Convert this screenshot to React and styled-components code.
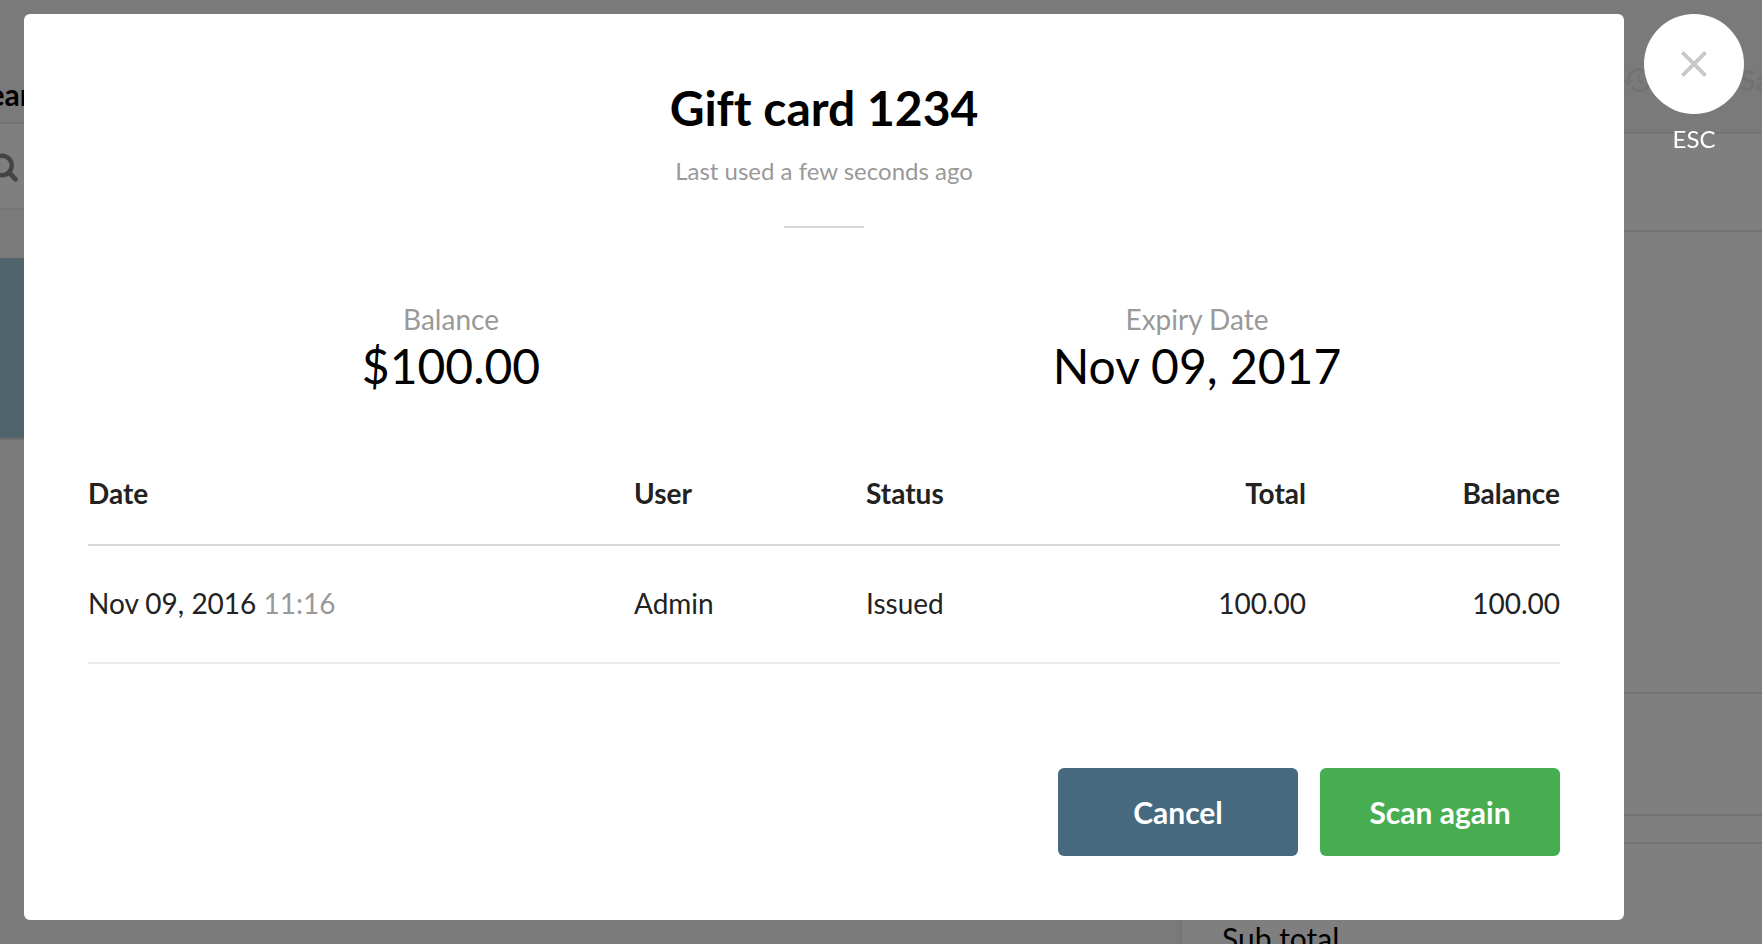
import React from "react";
import styled, { createGlobalStyle } from "styled-components";
import { MdHistory } from "react-icons/md";

const GlobalStyle = createGlobalStyle`
  * { box-sizing: border-box; }
  body {
    margin: 0;
    font-family: Lato, "Liberation Sans", sans-serif;
    font-variant-ligatures: none;
    color: #222;
    overflow: hidden;
  }
`;

const Register = styled.div`
  display: flex;
  height: 100vh;
  margin-left: -80px;
  overflow: hidden;
  background: #f5f5f5;
`;

const Catalog = styled.section`
  flex: 1;
`;

const CatalogTitle = styled.h2`
  margin: 0;
  height: 124px;
  padding: 76px 52px 0;
  font-size: 30px;
  line-height: 36px;
  color: #000;
  border-bottom: 2px solid #e8e8e8;
`;

const SearchRow = styled.div`
  display: flex;
  align-items: center;
  height: 86px;
  padding: 4px 68px 0;
  color: #888;
  background: #fff;
  border-bottom: 2px solid #e8e8e8;
`;

const Tile = styled.div`
  height: 182px;
  margin: 48px 60px 0;
  background: #9fc8d6;
  border-bottom: 2px solid #e0dfe0;
`;

const Sale = styled.section`
  width: 582px;
`;

const SaleActions = styled.div`
  display: flex;
  align-items: flex-start;
  justify-content: flex-end;
  gap: 96px;
  height: 134px;
  padding: 62px 0 0;
  font-size: 28px;
  line-height: 36px;
  color: #e4e4e4;
  border-bottom: 2px solid #e8e8e8;
`;

const SaleAction = styled.span`
  display: flex;
  align-items: center;
  width: 22px;
  height: 36px;
  font-weight: 700;
  white-space: nowrap;

  svg {
    flex-shrink: 0;
  }
`;

const SaleBody = styled.div`
  min-height: 100vh;
  background: #fff;
  border-left: 2px solid #e8e8e8;
`;

const SaleRow = styled.div`
  height: ${(p) => p.$height}px;
  border-bottom: 2px solid #e8e8e8;
`;

const SubTotal = styled.div`
  padding: 76px 40px 0;
  font-size: 30px;
  line-height: 36px;
  color: #000;
`;

const Overlay = styled.div`
  position: fixed;
  inset: 0;
  display: flex;
  align-items: flex-start;
  gap: 20px;
  padding: 14px 18px 24px 24px;
  background: rgba(0, 0, 0, 0.5);
`;

const Dialog = styled.div`
  flex: 1;
  padding: 64px;
  background: #fff;
  border-radius: 6px;
`;

const Heading = styled.header`
  display: flex;
  flex-direction: column;
  align-items: center;
`;

const Title = styled.h1`
  margin: 0;
  font-size: 48px;
  line-height: 60px;
  color: #000;
`;

const LastUsed = styled.p`
  margin: 16px 0 0;
  font-size: 24px;
  line-height: 34px;
  color: #999;
`;

const Divider = styled.hr`
  width: 80px;
  height: 2px;
  margin: 38px 0 0;
  border: 0;
  background: #d8d8d8;
`;

const Summary = styled.dl`
  display: grid;
  grid-template-columns: 1fr 1fr;
  gap: 20px;
  margin: 72px 0 0;
  text-align: center;
`;

const Label = styled.dt`
  font-size: 28px;
  line-height: 38px;
  color: #999;
`;

const Value = styled.dd`
  margin: 0;
  font-size: 48px;
  line-height: 56px;
  color: #000;
`;

const History = styled.table`
  width: 100%;
  margin-top: 52px;
  border-collapse: separate;
  border-spacing: 0;
  table-layout: fixed;
  font-size: 28px;
  line-height: 34px;
`;

const Col = styled.col`
  width: ${(p) => p.$width};
`;

const HeadCell = styled.th`
  padding: 30px 0 34px;
  text-align: ${(p) => p.$align || "left"};
  border-bottom: 2px solid #d8d8d8;
`;

const Cell = styled.td`
  padding: 40px 0 42px;
  text-align: ${(p) => p.$align || "left"};
  border-bottom: 2px solid #ebebeb;
`;

const Time = styled.span`
  color: #999;
`;

const Actions = styled.div`
  display: flex;
  justify-content: flex-end;
  gap: 22px;
  margin-top: 104px;
`;

const Button = styled.button`
  width: 240px;
  height: 88px;
  border: 0;
  border-radius: 6px;
  font: 700 30px Lato, "Liberation Sans", sans-serif;
  color: #fff;
  background: ${(p) => (p.$primary ? "#47ad51" : "#46697f")};
`;

const CloseColumn = styled.div`
  display: flex;
  flex-direction: column;
  align-items: center;
  gap: 8px;
  font-size: 24px;
  line-height: 34px;
  color: #fff;
`;

const CloseButton = styled.button`
  display: grid;
  place-items: center;
  width: 100px;
  height: 100px;
  padding: 0;
  border: 0;
  border-radius: 50%;
  color: #c8c8c8;
  background: #fff;
`;

export default function App() {
  return (
    <>
      <GlobalStyle />
      <Register aria-hidden="true">
        <Catalog>
          <CatalogTitle>Search</CatalogTitle>
          <SearchRow>
            <svg width="32" height="32" viewBox="0 0 32 32" fill="none" stroke="currentColor" strokeLinecap="round">
              <circle cx="14" cy="13.5" r="9.8" strokeWidth="4.4" />
              <path d="M21 20.5l6.6 6.8" strokeWidth="4.8" />
            </svg>
          </SearchRow>
          <Tile />
        </Catalog>
        <Sale>
          <SaleActions>
            <SaleAction>
              <MdHistory size={32} />
            </SaleAction>
            <SaleAction>Save</SaleAction>
          </SaleActions>
          <SaleBody>
            <SaleRow $height={98} />
            <SaleRow $height={462} />
            <SaleRow $height={122} />
            <SaleRow $height={28} />
            <SubTotal>Sub total</SubTotal>
          </SaleBody>
        </Sale>
      </Register>
      <Overlay>
        <Dialog role="dialog" aria-modal="true" aria-labelledby="dialog-title">
          <Heading>
            <Title id="dialog-title">Gift card 1234</Title>
            <LastUsed>Last used a few seconds ago</LastUsed>
            <Divider />
          </Heading>
          <Summary>
            <div>
              <Label>Balance</Label>
              <Value>$100.00</Value>
            </div>
            <div>
              <Label>Expiry Date</Label>
              <Value>Nov 09, 2017</Value>
            </div>
          </Summary>
          <History>
            <colgroup>
              <Col $width="546px" />
              <Col $width="232px" />
              <Col $width="auto" />
              <Col $width="220px" />
              <Col $width="254px" />
            </colgroup>
            <thead>
              <tr>
                <HeadCell>Date</HeadCell>
                <HeadCell>User</HeadCell>
                <HeadCell>Status</HeadCell>
                <HeadCell $align="right">Total</HeadCell>
                <HeadCell $align="right">Balance</HeadCell>
              </tr>
            </thead>
            <tbody>
              <tr>
                <Cell>
                  Nov 09, 2016 <Time>11:16</Time>
                </Cell>
                <Cell>Admin</Cell>
                <Cell>Issued</Cell>
                <Cell $align="right">100.00</Cell>
                <Cell $align="right">100.00</Cell>
              </tr>
            </tbody>
          </History>
          <Actions>
            <Button type="button">Cancel</Button>
            <Button type="button" $primary>
              Scan again
            </Button>
          </Actions>
        </Dialog>
        <CloseColumn>
          <CloseButton type="button" aria-label="Close">
            <svg width="28" height="28" viewBox="0 0 28 28" fill="none" stroke="currentColor" strokeWidth="3.8">
              <path d="M2.4 2.4l23.2 23.2M25.6 2.4L2.4 25.6" />
            </svg>
          </CloseButton>
          <span>ESC</span>
        </CloseColumn>
      </Overlay>
    </>
  );
}
